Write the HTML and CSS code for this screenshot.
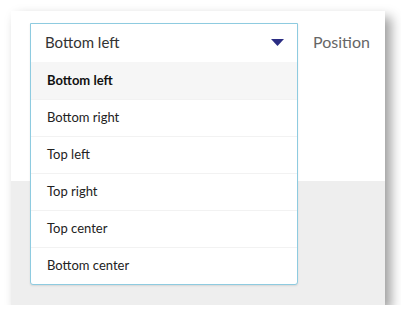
FILE: index.html
```html
<!DOCTYPE html>
<html lang="en">
<head>
    <meta charset="UTF-8">
    <title>Position dropdown</title>
    <link rel="stylesheet" href="styles.css">
</head>
<body>
    <div class="panel">
        <div class="panel-top">
            <div class="field">
                <div class="dropdown">
                    <div class="dropdown-head">
                        <span>Bottom left</span>
                        <svg class="caret" width="13" height="7" viewBox="0 0 13 7"><path d="M0 0H13L6.5 7Z" fill="#2b2d83"/></svg>
                    </div>
                    <ul class="options">
                        <li class="selected">Bottom left</li>
                        <li>Bottom right</li>
                        <li>Top left</li>
                        <li>Top right</li>
                        <li>Top center</li>
                        <li>Bottom center</li>
                    </ul>
                </div>
            </div>
            <label class="field-label">Position</label>
        </div>
        <div class="panel-bottom"></div>
    </div>
</body>
</html>
```

FILE: styles.css
```css
/* General Styles */
body {
    margin: 0;
    padding: 0;
    background: #fff;
    font-family: Lato, "Open Sans", sans-serif;
}

.panel {
    margin: 11px 0 0 11px;
    width: 374px;
    height: 294px;
    display: flex;
    flex-direction: column;
    background: #eee;
    box-shadow: 6px 6px 11px rgba(0, 0, 0, 0.38);
}

.panel-top {
    height: 158px;
    padding: 12px 0 0 19px;
    background: #fff;
    display: flex;
    align-items: flex-start;
    gap: 15px;
}

.field {
    position: relative;
    width: 268px;
    height: 40px;
    flex-shrink: 0;
}

/* Open menu lies over the panel */
.dropdown {
    position: absolute;
    top: 0;
    left: 0;
    right: 0;
    background: #fff;
    border: 1px solid #8ecbe0;
    border-radius: 0 0 3px 3px;
    box-shadow: 0 1px 2px rgba(0, 0, 0, 0.1);
}

.dropdown-head {
    height: 38px;
    padding: 0 13px 2px 14px;
    box-sizing: border-box;
    display: flex;
    align-items: center;
    justify-content: space-between;
    font-size: 15px;
    color: #333;
}

.caret {
    display: block;
}

.options {
    list-style: none;
    margin: 0;
    padding: 0;
}

.options li {
    height: 34px;
    line-height: 34px;
    padding: 0 0 2px 16px;
    font-size: 13px;
    color: #222;
    border-top: 1px solid #f2f2f2;
}

.options li:first-child {
    border-top-color: transparent;
}

.options li.selected {
    background: #f6f6f6;
    font-weight: bold;
    color: #111;
}

.field-label {
    line-height: 36px;
    margin-top: 1px;
    font-size: 16px;
    color: #666;
}

.panel-bottom {
    flex: 1;
}
```
